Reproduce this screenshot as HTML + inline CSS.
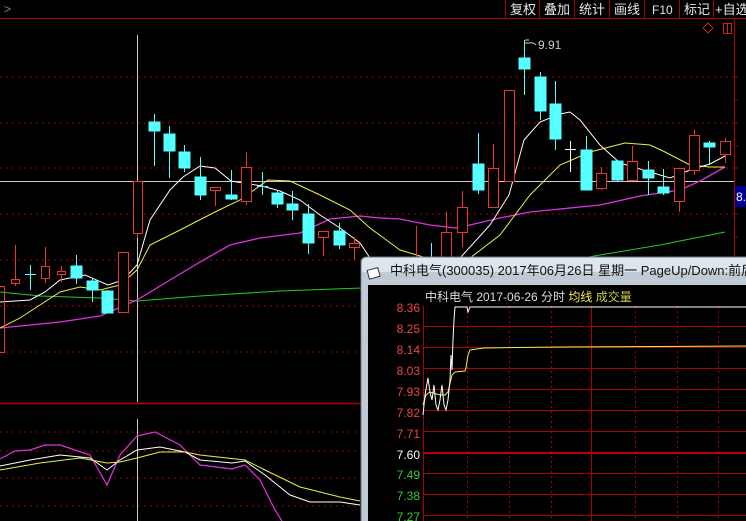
<!DOCTYPE html>
<html><head><meta charset="utf-8"><style>
html,body{margin:0;padding:0;background:#000;width:746px;height:521px;overflow:hidden;font-family:"Liberation Sans","Noto Sans CJK SC",sans-serif}
svg{position:absolute;left:0;top:0}
</style></head><body>
<svg width="746" height="521" viewBox="0 0 746 521" xmlns="http://www.w3.org/2000/svg">
<rect width="746" height="521" fill="#000"/>
<!-- top bar -->
<text x="4" y="13" fill="#888" font-size="12">&gt;</text>
<line x1="0" y1="18.5" x2="746" y2="18.5" stroke="#a00" stroke-width="1"/>
<g stroke="#a00"><line x1="505.5" y1="0" x2="505.5" y2="18"/><line x1="539.5" y1="0" x2="539.5" y2="18"/><line x1="574.5" y1="0" x2="574.5" y2="18"/><line x1="609.5" y1="0" x2="609.5" y2="18"/><line x1="644.5" y1="0" x2="644.5" y2="18"/><line x1="679.5" y1="0" x2="679.5" y2="18"/><line x1="713.5" y1="0" x2="713.5" y2="18"/></g>
<g fill="#e8e8e8" font-size="13"><text x="510" y="14">复权</text><text x="544" y="14">叠加</text><text x="579" y="14">统计</text><text x="614" y="14">画线</text><text x="652" y="14" font-size="12">F10</text><text x="684" y="14">标记</text><text x="715" y="14">+自选</text></g>
<!-- right axis -->
<line x1="734.5" y1="19" x2="734.5" y2="521" stroke="#a00"/>
<g stroke="#a00"><line x1="734" y1="77" x2="738" y2="77"/><line x1="734" y1="100" x2="738" y2="100"/><line x1="734" y1="123" x2="738" y2="123"/><line x1="734" y1="146" x2="738" y2="146"/><line x1="734" y1="168" x2="738" y2="168"/><line x1="734" y1="214" x2="738" y2="214"/><line x1="734" y1="237" x2="738" y2="237"/></g>
<path d="M708 23 L713 28 L708 33 L703 28 Z" fill="none" stroke="#c22"/>
<rect x="723.5" y="23.5" width="8" height="10" fill="none" stroke="#c22"/><line x1="727.5" y1="23" x2="727.5" y2="33" stroke="#c22"/>
<!-- grid -->
<g stroke="#a00" stroke-dasharray="2,4"><line x1="0" y1="77" x2="734" y2="77"/><line x1="0" y1="123" x2="734" y2="123"/><line x1="0" y1="168" x2="734" y2="168"/><line x1="0" y1="214" x2="734" y2="214"/><line x1="0" y1="260" x2="734" y2="260"/><line x1="0" y1="306" x2="734" y2="306"/><line x1="0" y1="352" x2="734" y2="352"/>
<line x1="0" y1="432" x2="734" y2="432"/><line x1="0" y1="451" x2="734" y2="451"/><line x1="0" y1="478" x2="734" y2="478"/><line x1="0" y1="506" x2="734" y2="506"/></g>
<line x1="0" y1="403.5" x2="734" y2="403.5" stroke="#a00" stroke-width="1.5"/>
<!-- crosshair -->
<line x1="137.5" y1="35" x2="137.5" y2="402" stroke="#ccc"/>
<line x1="137.5" y1="419" x2="137.5" y2="521" stroke="#ccc"/>
<line x1="0" y1="181.5" x2="734" y2="181.5" stroke="#ccc"/>
<rect x="735" y="186" width="11" height="21" fill="#000090"/>
<text x="736" y="201" fill="#fff" font-size="12">8.</text>
<!-- MA lines -->
<polyline fill="none" stroke="#2c2" points="0,292 40,296 100,298 137,301 200,296 280,291 362,288"/>
<polyline fill="none" stroke="#2c2" points="560,262 600,255 660,245 725,232"/>
<polyline fill="none" stroke="#d3d" stroke-width="1.3" points="0,328 60,322 100,316 137,300 170,280 200,262 230,245 260,238 300,233 330,219 360,216 380,218 400,219 430,225 455,228 470,225 500,218 530,212 560,209 600,205 640,196 680,190 700,181 725,167"/>
<polyline fill="none" stroke="#ee4" points="0,328 20,318 60,292 80,287 100,290 120,285 137,270 150,245 180,230 215,212 240,200 268,180 290,181 320,195 350,210 370,228 400,250 440,262 470,258 500,235 530,195 560,165 590,152 625,143 650,145 665,152 690,165 710,167 725,167"/>
<polyline fill="none" stroke="#fff" points="0,302 30,300 45,292 60,280 85,275 108,285 123,280 137,265 150,220 170,190 183,177 200,166 215,168 231,181 262,186 280,191 300,200 320,215 340,228 360,243 370,258 420,262 460,258 490,225 509,195 524,140 540,122 560,114 570,112 580,120 600,145 620,163 650,172 670,178 690,170 710,164 725,156"/>
<!-- candles -->
<g stroke="#e33" fill="none">
<rect x="-3.5" y="286.5" width="8" height="66"/>
<line x1="15.5" y1="245" x2="15.5" y2="286"/><rect x="11.5" y="279.5" width="8" height="4" fill="#000"/>
<line x1="45.5" y1="247" x2="45.5" y2="283"/><rect x="41.5" y="266.5" width="8" height="12" fill="#000"/>
<line x1="61.5" y1="266" x2="61.5" y2="282"/><rect x="57.5" y="271.5" width="8" height="3" fill="#000"/>
<rect x="118.5" y="252.5" width="10" height="60" fill="#000"/>
<rect x="133.5" y="181.5" width="9" height="52" fill="#000"/><line x1="137.5" y1="233" x2="137.5" y2="238"/>
<line x1="215.5" y1="187" x2="215.5" y2="206"/><rect x="210.5" y="187.5" width="10" height="3" fill="#000"/>
<line x1="246.5" y1="152" x2="246.5" y2="205"/><rect x="241.5" y="167.5" width="10" height="34" fill="#000"/>
<line x1="323.5" y1="231" x2="323.5" y2="256"/><rect x="318.5" y="231.5" width="10" height="6" fill="#000"/>
<line x1="354.5" y1="237" x2="354.5" y2="260"/><rect x="349.5" y="243.5" width="10" height="4" fill="#000"/>
<line x1="416.5" y1="226" x2="416.5" y2="260"/>
<line x1="446.5" y1="212" x2="446.5" y2="260"/><rect x="441.5" y="232.5" width="10" height="28" fill="#000"/>
<line x1="462.5" y1="191" x2="462.5" y2="247"/><rect x="457.5" y="207.5" width="10" height="25" fill="#000"/>
<line x1="493.5" y1="144" x2="493.5" y2="207"/><rect x="488.5" y="168.5" width="10" height="39" fill="#000"/>
<rect x="504.5" y="90.5" width="10" height="91" fill="#000"/>
<line x1="601.5" y1="167" x2="601.5" y2="190"/><rect x="596.5" y="173.5" width="10" height="15" fill="#000"/>
<line x1="632.5" y1="146" x2="632.5" y2="180"/><rect x="627.5" y="161.5" width="10" height="19" fill="#000"/>
<line x1="679.5" y1="168" x2="679.5" y2="212"/><rect x="674.5" y="168.5" width="10" height="33" fill="#000"/>
<line x1="694.5" y1="130" x2="694.5" y2="175"/><rect x="689.5" y="135.5" width="10" height="35" fill="#000"/>
<line x1="725.5" y1="138" x2="725.5" y2="163"/><rect x="720.5" y="141.5" width="10" height="13" fill="#000"/>
</g>
<g stroke="#5ff" fill="#5ff">
<line x1="30.5" y1="265" x2="30.5" y2="290"/><line x1="25" y1="274.5" x2="36" y2="274.5"/>
<line x1="76.5" y1="255" x2="76.5" y2="284"/><rect x="71" y="266" width="11" height="12"/>
<line x1="92.5" y1="278" x2="92.5" y2="302"/><rect x="87" y="281" width="11" height="9"/>
<line x1="107.5" y1="290" x2="107.5" y2="313"/><rect x="102" y="291" width="11" height="22"/>
<line x1="154.5" y1="114" x2="154.5" y2="166"/><rect x="149" y="122" width="11" height="9"/>
<line x1="169.5" y1="126" x2="169.5" y2="178"/><rect x="164" y="134" width="11" height="17"/>
<line x1="184.5" y1="145" x2="184.5" y2="172"/><rect x="179" y="152" width="11" height="16"/>
<line x1="200.5" y1="157" x2="200.5" y2="200"/><rect x="195" y="177" width="11" height="18"/>
<line x1="231.5" y1="170" x2="231.5" y2="200"/><rect x="226" y="195" width="11" height="4"/>
<line x1="262.5" y1="172" x2="262.5" y2="195"/><line x1="257" y1="186.5" x2="268" y2="186.5"/>
<line x1="277.5" y1="190" x2="277.5" y2="208"/><rect x="272" y="193" width="11" height="11"/>
<line x1="292.5" y1="191" x2="292.5" y2="220"/><rect x="287" y="204" width="11" height="6"/>
<line x1="308.5" y1="204" x2="308.5" y2="254"/><rect x="303" y="214" width="11" height="29"/>
<line x1="339.5" y1="223" x2="339.5" y2="249"/><rect x="334" y="231" width="11" height="14"/>
<line x1="431.5" y1="243" x2="431.5" y2="260"/>
<line x1="478.5" y1="133" x2="478.5" y2="194"/><rect x="473" y="164" width="11" height="26"/>
<line x1="524.5" y1="40" x2="524.5" y2="95"/><rect x="519" y="58" width="11" height="11"/>
<line x1="540.5" y1="72" x2="540.5" y2="120"/><rect x="535" y="77" width="11" height="34"/>
<line x1="555.5" y1="81" x2="555.5" y2="150"/><rect x="550" y="104" width="11" height="35"/>
<line x1="586.5" y1="136" x2="586.5" y2="190"/><rect x="581" y="150" width="11" height="40"/>
<line x1="617.5" y1="161" x2="617.5" y2="182"/><rect x="612" y="161" width="11" height="19"/>
<line x1="648.5" y1="161" x2="648.5" y2="195"/><rect x="643" y="170" width="11" height="8"/>
<line x1="663.5" y1="169" x2="663.5" y2="195"/><rect x="658" y="187" width="11" height="6"/>
<line x1="709.5" y1="141" x2="709.5" y2="165"/><rect x="704" y="143" width="11" height="4"/>
</g>
<line x1="565" y1="149.5" x2="576" y2="149.5" stroke="#fff"/><line x1="570.5" y1="141" x2="570.5" y2="172" stroke="#fff"/>
<path d="M525 40 L529 40 M525 43 L529 43 Q533 42 536 45" stroke="#ccc" fill="none"/>
<text x="538" y="49" fill="#ccc" font-size="12">9.91</text>
<!-- lower indicator -->
<polyline fill="none" stroke="#d3d" stroke-width="1.2" points="0,459 15,451 30,450 45,445 60,445 90,455 107,485 120,455 137,436 155,432 180,445 200,465 232,469 245,465 260,480 275,510 282,521"/>
<polyline fill="none" stroke="#fff" points="0,466 30,460 60,455 90,458 107,470 120,460 137,450 160,447 185,452 200,460 232,463 245,461 265,475 290,495 310,502 340,502 360,505"/>
<polyline fill="none" stroke="#ee4" points="0,470 40,463 80,458 107,463 120,462 137,458 160,452 185,452 200,455 245,460 265,470 300,487 340,497 360,501"/>
<!-- popup window -->
<defs><linearGradient id="tb" x1="0" y1="0" x2="0" y2="1"><stop offset="0" stop-color="#dfe6ee"/><stop offset="1" stop-color="#b9c4d0"/></linearGradient></defs>
<rect x="361" y="257" width="390" height="270" rx="5" fill="url(#tb)" stroke="#6a7480"/>
<rect x="362" y="272" width="390" height="250" fill="#c0cad4"/>
<rect x="368" y="285" width="380" height="240" fill="#000"/>
<rect x="368" y="269" width="11" height="9" fill="#fff" stroke="#335" transform="rotate(-15 373 273)"/>
<text x="390" y="275" fill="#111" font-size="13">中科电气(300035) 2017年06月26日 星期一 PageUp/Down:前后日</text>
<text x="425" y="301" fill="#ddd" font-size="12">中科电气   2017-06-26 分时 <tspan fill="#ee4">均线</tspan> <tspan fill="#cc4">成交量</tspan></text>
<line x1="423.5" y1="306" x2="423.5" y2="521" stroke="#a00"/>
<g stroke="#a00"><line x1="423" y1="326.5" x2="746" y2="326.5"/><line x1="423" y1="347.5" x2="746" y2="347.5"/><line x1="423" y1="368.5" x2="746" y2="368.5"/><line x1="423" y1="389.5" x2="746" y2="389.5"/><line x1="423" y1="410.5" x2="746" y2="410.5"/><line x1="423" y1="431.5" x2="746" y2="431.5"/><line x1="423" y1="473.5" x2="746" y2="473.5"/><line x1="423" y1="494.5" x2="746" y2="494.5"/><line x1="423" y1="515.5" x2="746" y2="515.5"/><line x1="591.5" y1="306" x2="591.5" y2="521"/></g>
<line x1="423" y1="453" x2="746" y2="453" stroke="#b00" stroke-width="2"/>
<g stroke="#a00" stroke-dasharray="2,3"><line x1="467.5" y1="306" x2="467.5" y2="521"/><line x1="509.5" y1="306" x2="509.5" y2="521"/><line x1="551.5" y1="306" x2="551.5" y2="521"/><line x1="635.5" y1="306" x2="635.5" y2="521"/><line x1="677.5" y1="306" x2="677.5" y2="521"/><line x1="718.5" y1="306" x2="718.5" y2="521"/></g>
<g font-size="12" text-anchor="end"><g fill="#e44"><text x="420" y="312">8.36</text><text x="420" y="333">8.25</text><text x="420" y="354">8.14</text><text x="420" y="375">8.03</text><text x="420" y="396">7.93</text><text x="420" y="417">7.82</text><text x="420" y="438">7.71</text></g><text x="420" y="459" fill="#fff">7.60</text><g fill="#3c3"><text x="420" y="479">7.49</text><text x="420" y="500">7.38</text><text x="420" y="521">7.27</text></g></g>
<polyline fill="none" stroke="#ee4" points="423,405 426,395 430,392 440,395 445,395 448,392 452,375 455,372 465,371 466,368 468,355 470,350 484,348 560,347 746,346"/>
<polyline fill="none" stroke="#fff" points="423,415 425,395 428,378 430,392 432,400 434,385 436,405 438,410 440,400 442,385 444,405 446,410 448,400 450,380 451,355 452,370 453,340 454,320 455,307 467,307 468,312 470,307 746,307"/>
</svg>
</body></html>
